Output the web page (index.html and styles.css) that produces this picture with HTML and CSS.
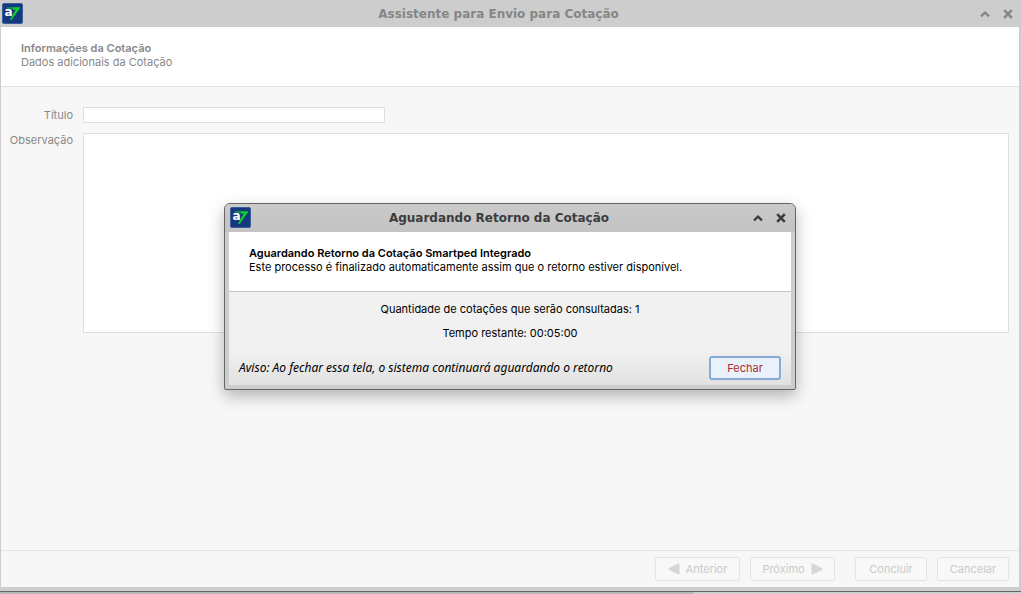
FILE: index.html
```html
<!DOCTYPE html>
<html lang="pt-BR">
<head>
<meta charset="utf-8">
<meta name="viewport" content="width=device-width, initial-scale=1">
<title>Assistente para Envio para Cotação</title>
<link rel="stylesheet" href="styles.css">
</head>
<body>
<main class="window">
  <header class="titlebar">
    <svg class="logo" viewBox="0 0 21 21" role="img" aria-label="a7">
      <rect x="0.5" y="0.5" width="20" height="20" rx="1.5" fill="#14397f" stroke="#3d5c9a"/>
      <path d="M5 4H18.4L17 6.4H5Z" fill="#0b8a55"/>
      <path d="M11 4.6H18.4L9.6 17L8 16.6L13.8 6.6H11Z" fill="#05d428"/>
      <text x="2.6" y="13" class="logo-letter">a</text>
    </svg>
    <h1 class="titlebar-text">Assistente para Envio para Cotação</h1>
    <div class="controls">
      <button class="control" type="button" aria-label="Recolher"><svg class="glyph" viewBox="0 0 10 10"><path d="M1 7.4L5 3.6L9 7.4" fill="none" stroke="currentColor" stroke-width="2.2"/></svg></button>
      <button class="control" type="button" aria-label="Fechar janela"><svg class="glyph" viewBox="0 0 10 10"><path d="M1.2 1.2L8.8 8.8M8.8 1.2L1.2 8.8" fill="none" stroke="currentColor" stroke-width="2.6"/></svg></button>
    </div>
  </header>
  <div class="content">
    <section class="banner">
      <h2 class="banner-title">Informações da Cotação</h2>
      <p class="banner-text">Dados adicionais da Cotação</p>
    </section>
    <form class="form">
      <label class="label" for="titulo">Título</label>
      <input class="field field-title" id="titulo" type="text">
      <label class="label label-top" for="obs">Observação</label>
      <textarea class="field field-notes" id="obs"></textarea>
    </form>
    <footer class="actions">
      <button class="button button-wide" type="button" disabled>
        <svg class="arrow" viewBox="0 0 12 12"><path d="M10.5 0.5Q11.5 0.3 11.5 1.5V10.5Q11.5 11.7 10.5 11.5L1 7Q0 6 1 5Z" fill="#d6d6d6"/></svg>
        Anterior
      </button>
      <button class="button button-wide" type="button" disabled>
        Próximo
        <svg class="arrow" viewBox="0 0 12 12"><path d="M1.5 0.5Q0.5 0.3 0.5 1.5V10.5Q0.5 11.7 1.5 11.5L11 7Q12 6 11 5Z" fill="#d6d6d6"/></svg>
      </button>
      <button class="button button-apart" type="button" disabled>Concluir</button>
      <button class="button" type="button" disabled>Cancelar</button>
    </footer>
  </div>
</main>
<div class="desktop-edge"></div>

<div class="overlay">
  <section class="dialog" role="dialog" aria-labelledby="dialog-name">
    <header class="titlebar titlebar-active">
      <svg class="logo" viewBox="0 0 21 21" role="img" aria-label="a7">
        <rect x="0.5" y="0.5" width="20" height="20" rx="1.5" fill="#14397f" stroke="#3d5c9a"/>
        <path d="M5 4H18.4L17 6.4H5Z" fill="#0b8a55"/>
        <path d="M11 4.6H18.4L9.6 17L8 16.6L13.8 6.6H11Z" fill="#05d428"/>
        <text x="2.6" y="13" class="logo-letter">a</text>
      </svg>
      <h1 class="titlebar-text" id="dialog-name">Aguardando Retorno da Cotação</h1>
      <div class="controls">
        <button class="control" type="button" aria-label="Recolher"><svg class="glyph" viewBox="0 0 10 10"><path d="M1 7.4L5 3.6L9 7.4" fill="none" stroke="currentColor" stroke-width="2.2"/></svg></button>
        <button class="control" type="button" aria-label="Fechar janela"><svg class="glyph" viewBox="0 0 10 10"><path d="M1.2 1.2L8.8 8.8M8.8 1.2L1.2 8.8" fill="none" stroke="currentColor" stroke-width="2.6"/></svg></button>
      </div>
    </header>
    <div class="dialog-content">
      <div class="banner banner-active">
        <h2 class="banner-title">Aguardando Retorno da Cotação Smartped Integrado</h2>
        <p class="banner-text">Este processo é finalizado automaticamente assim que o retorno estiver disponível.</p>
      </div>
      <div class="status">
        <p class="status-line">Quantidade de cotações que serão consultadas: 1</p>
        <p class="status-line">Tempo restante: 00:05:00</p>
      </div>
      <div class="dialog-footer">
        <p class="warning">Aviso: Ao fechar essa tela, o sistema continuará aguardando o retorno</p>
        <button class="button button-close" type="button">Fechar</button>
      </div>
    </div>
  </section>
</div>
</body>
</html>
```
FILE: styles.css
```css
* {
  box-sizing: border-box;
}

body {
  margin: 0;
  height: 100vh;
  display: flex;
  flex-direction: column;
  overflow: hidden;
  font: 11px/14px Inter, "Liberation Sans", sans-serif;
  color: #888;
  background: #b8b8b8;
}

h1, h2, p {
  margin: 0;
}

.logo-letter {
  font: bold 12px "DejaVu Sans", sans-serif;
  fill: #fff;
}

.window {
  flex: 1;
  display: flex;
  flex-direction: column;
  border-bottom: 1px solid #666;
  background: #cdcdcd;
}

.desktop-edge {
  height: 2px;
  background: linear-gradient(to right, #b8b8b8 68%, #d0d0d0 68%);
}

.titlebar {
  display: flex;
  align-items: center;
  height: 27px;
  padding: 0 8px 0 2px;
  color: #868686;
}

.titlebar-text {
  flex: 1;
  padding-right: 6px;
  text-align: center;
  font: bold 12px/16px "DejaVu Sans", sans-serif;
}

.logo {
  width: 21px;
  height: 21px;
}

.controls {
  display: flex;
  gap: 13px;
}

.control {
  display: flex;
  padding: 0;
  border: 0;
  background: none;
  color: inherit;
}

.glyph {
  width: 10px;
  height: 10px;
}

.content {
  flex: 1;
  display: flex;
  flex-direction: column;
  margin: 0 2px 4px 1px;
  background: #f7f7f7;
}

.banner {
  height: 60px;
  padding: 14px 20px;
  border-bottom: 1px solid #e2e2e2;
  background: #fff;
}

.banner-title {
  font-size: 11px;
  font-weight: 600;
}

.form {
  flex: 1;
  display: grid;
  grid-template-columns: 72px 1fr;
  grid-template-rows: 16px 200px;
  gap: 10px;
  padding: 20px 10px 0 0;
}

.label {
  align-self: center;
  text-align: right;
}

.label-top {
  align-self: start;
}

.field {
  padding: 0 4px;
  border: 1px solid #dedede;
  border-radius: 0;
  background: #fff;
  font: inherit;
  resize: none;
  outline: none;
}

.field-title {
  width: 302px;
  max-width: 100%;
}

.actions {
  display: flex;
  justify-content: flex-end;
  gap: 10px;
  padding: 6px 10px;
  border-top: 1px solid #e4e4e4;
}

.button {
  display: flex;
  align-items: center;
  justify-content: center;
  gap: 6px;
  width: 72px;
  height: 24px;
  padding: 0;
  border: 1px solid #e4e4e4;
  border-radius: 2px;
  background: #f8f8f8;
  color: #cacaca;
  font: inherit;
}

.button-wide {
  width: 85px;
}

.button-apart {
  margin-left: 10px;
}

.arrow {
  width: 12px;
  height: 12px;
}

.overlay {
  position: absolute;
  inset: 0;
  display: grid;
  place-items: center;
  padding: 0 1px 2px 0;
}

.dialog {
  width: 572px;
  max-width: 100%;
  border: 1px solid #666;
  border-radius: 6px 6px 2px 2px;
  background: #cdcdcd;
  color: #000;
  box-shadow: 0 6px 16px rgba(0, 0, 0, 0.28);
}

.titlebar-active {
  height: 28px;
  padding: 0 9px 0 5px;
  border-radius: 5px 5px 0 0;
  background: linear-gradient(#cacaca, #c3c3c3);
  color: #3c3c3c;
}

.dialog-content {
  margin: 0 4px 4px;
  background: #f1f1f1;
}

.banner-active {
  border-color: #c4c4c4;
}

.status {
  display: grid;
  gap: 10px;
  padding: 10px 0;
  text-align: center;
}

.dialog-footer {
  display: flex;
  align-items: center;
  justify-content: space-between;
  padding: 6px 10px 5px;
  background: linear-gradient(#f1f1f1, #e1e1e1);
}

.warning {
  font: italic 12px/16px "Noto Sans", sans-serif;
}

.button-close {
  border: 2px solid #86acd4;
  border-radius: 3px;
  background: #e9f2fb;
  color: #b02a2a;
}
```
